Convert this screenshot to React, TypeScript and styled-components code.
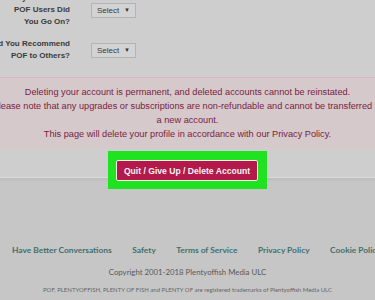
import React from "react";
import styled, { createGlobalStyle } from "styled-components";

const GlobalStyle = createGlobalStyle`
  html, body {
    margin: 0;
    padding: 0;
  }
  body {
    background: #c6c6c6;
    font-family: "Liberation Sans", Arial, sans-serif;
    overflow: hidden;
  }
`;

const Page = styled.div`
  width: 375px;
  height: 300px;
  overflow: hidden;
  display: flex;
  flex-direction: column;
`;

const FormPanel = styled.section`
  background: #cecece;
  padding-bottom: 15px;
`;

// the view is scrolled, so the first question starts above the top edge
const QuestionList = styled.div`
  display: grid;
  grid-template-columns: 120px auto;
  column-gap: 21px;
  row-gap: 10px;
  align-items: center;
  margin: -8px 0 0 -50px;
`;

const QuestionLabel = styled.div`
  text-align: right;
  font-size: 8px;
  font-weight: bold;
  line-height: 12px;
  color: #3a3a3a;
`;

const SelectBox = styled.div`
  width: 45px;
  height: 15px;
  box-sizing: border-box;
  display: flex;
  align-items: center;
  justify-content: space-between;
  padding: 0 5px 0 5px;
  border: 1px solid #b4b4b4;
  background: #d3d3d3;
  font-size: 8px;
  color: #3a3a3a;
`;

const Caret = styled.span`
  font-size: 6px;
  color: #333;
`;

const Notice = styled.section`
  border-top: 1px solid #d9b6c1;
  background: #d5c9cc;
  padding: 7px 0;
  display: flex;
  justify-content: center;
  overflow: hidden;
`;

const NoticeText = styled.div`
  flex: none;
  width: 420px;
  text-align: center;
  font-size: 9.2px;
  line-height: 14px;
  color: #7b1c3e;

  p {
    margin: 0;
  }
`;

const ActionBar = styled.div`
  box-sizing: border-box;
  height: 30px;
  padding-top: 3px;
  background: #cdcecd;
  border-bottom: 1px solid #d9d9d9;
  display: flex;
  justify-content: center;
  align-items: flex-start;
`;

const Highlight = styled.div`
  position: relative;
  z-index: 1;
  flex: none;
  padding: 9px 9px 8px 8px;
  background: #20e220;
`;

const DeleteButton = styled.button`
  display: block;
  height: 21px;
  padding: 0 7px;
  border: 1px solid #ececec;
  border-radius: 2px;
  background: #b3194b;
  color: #f4f4f4;
  font-family: "Liberation Sans", Arial, sans-serif;
  font-size: 8.6px;
  font-weight: bold;
  cursor: pointer;
`;

const Footer = styled.footer`
  flex: 1;
  padding-top: 66px;
  background: linear-gradient(#bdbdbd, #c6c6c6 4px);
  font-family: Lato, "Open Sans", sans-serif;
  display: flex;
  flex-direction: column;
  align-items: center;
  overflow: hidden;
`;

const FooterLinks = styled.nav`
  align-self: flex-start;
  display: flex;
  gap: 20.5px;
  padding-left: 12px;
  white-space: nowrap;
`;

const FooterLink = styled.a`
  font-size: 8.4px;
  font-weight: bold;
  line-height: 12px;
  color: #40706c;
  text-decoration: none;
`;

const Copyright = styled.div`
  margin-top: 10px;
  font-size: 7.8px;
  line-height: 12px;
  color: #595959;
  white-space: nowrap;
`;

const Trademark = styled.div`
  margin-top: 8px;
  font-size: 6px;
  line-height: 8px;
  color: #666;
  white-space: nowrap;
`;

const links = [
  "Have Better Conversations",
  "Safety",
  "Terms of Service",
  "Privacy Policy",
  "Cookie Policy",
];

export default function App() {
  return (
    <Page>
      <GlobalStyle />
      <FormPanel>
        <QuestionList>
          <QuestionLabel>
            How Many Dates With
            <br />
            POF Users Did
            <br />
            You Go On?
          </QuestionLabel>
          <SelectBox>
            Select <Caret>▼</Caret>
          </SelectBox>
          <QuestionLabel>
            Would You Recommend
            <br />
            POF to Others?
          </QuestionLabel>
          <SelectBox>
            Select <Caret>▼</Caret>
          </SelectBox>
        </QuestionList>
      </FormPanel>
      <Notice>
        <NoticeText>
          <p>Deleting your account is permanent, and deleted accounts cannot be reinstated.</p>
          <p>
            Please note that any upgrades or subscriptions are non-refundable and cannot be
            transferred to
            <br />a new account.
          </p>
          <p>This page will delete your profile in accordance with our Privacy Policy.</p>
        </NoticeText>
      </Notice>
      <ActionBar>
        <Highlight>
          <DeleteButton>Quit / Give Up / Delete Account</DeleteButton>
        </Highlight>
      </ActionBar>
      <Footer>
        <FooterLinks>
          {links.map((l) => (
            <FooterLink key={l} href="#">
              {l}
            </FooterLink>
          ))}
        </FooterLinks>
        <Copyright>Copyright 2001-2018 Plentyoffish Media ULC</Copyright>
        <Trademark>
          POF, PLENTYOFFISH, PLENTY OF FISH and PLENTY OF are registered trademarks of
          Plentyoffish Media ULC
        </Trademark>
      </Footer>
    </Page>
  );
}
